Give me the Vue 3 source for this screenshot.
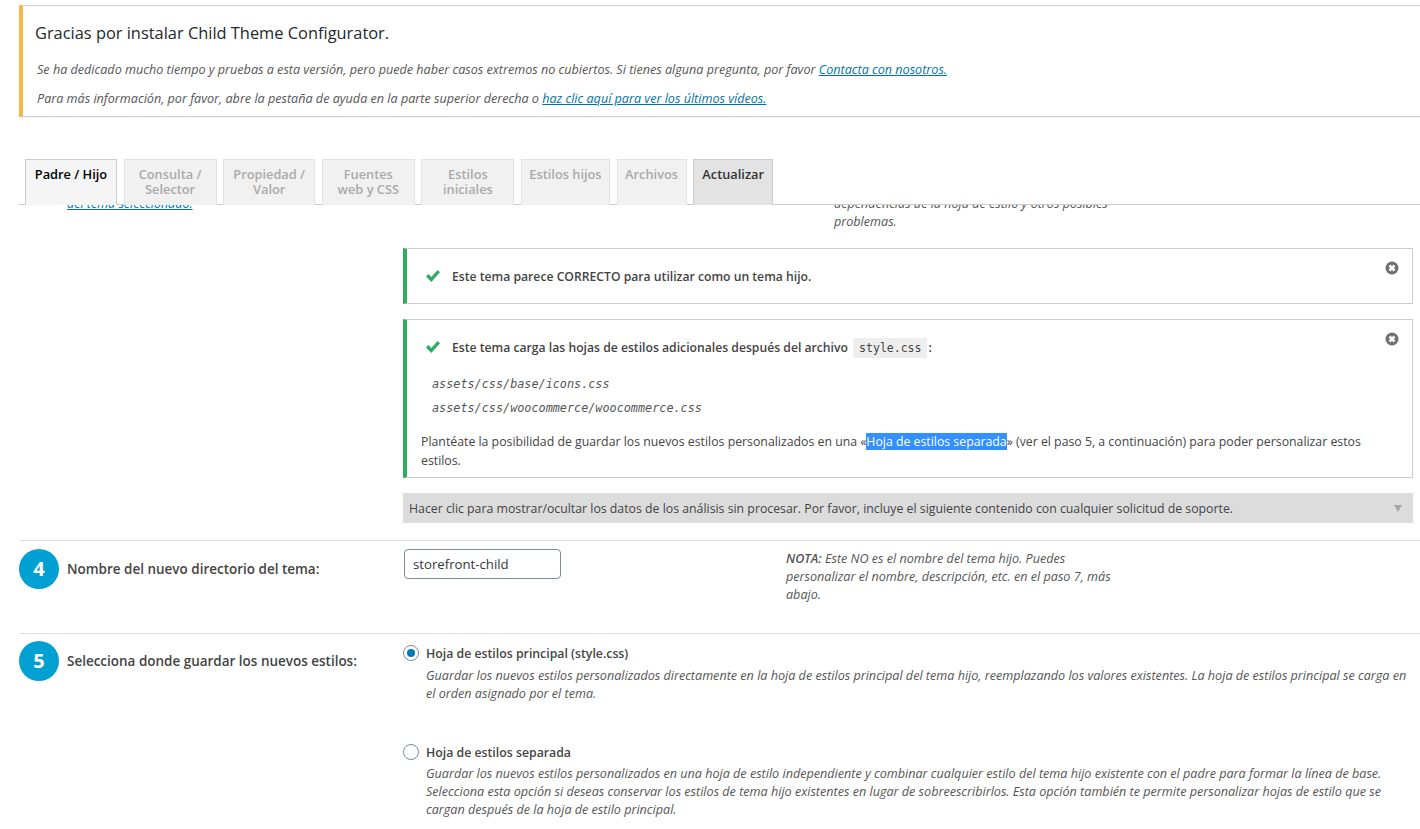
<template>
  <div class="page">
    <div class="notice">
      <h2>Gracias por instalar Child Theme Configurator.</h2>
      <p><em>Se ha dedicado mucho tiempo y pruebas a esta versión, pero puede haber casos extremos no cubiertos. Si tienes alguna pregunta, por favor <a href="#">Contacta con nosotros.</a></em></p>
      <p><em>Para más información, por favor, abre la pestaña de ayuda en la parte superior derecha o <a href="#">haz clic aquí para ver los últimos vídeos.</a></em></p>
    </div>

    <div class="tabs">
      <div
        v-for="tab in tabs"
        :key="tab.label"
        :class="['tab', { active: tab.active, update: tab.update }]"
        :style="{ width: tab.width + 'px' }"
      >{{ tab.label }}</div>
    </div>

    <div class="panel">
      <div class="cut-row">
        <a class="cut-link" href="#">del tema seleccionado.</a>
        <em class="cut-note">dependencias de la hoja de estilo y otros posibles problemas.</em>
      </div>

      <div class="analysis">
        <div class="alert first">
          <div class="alert-head">
            <svg class="check" viewBox="0 0 16 14"><path d="M1 7.4 3.4 5l2.9 3L12.6 1 15 3.300 6.300 13z" /></svg>
            <span>Este tema parece CORRECTO para utilizar como un tema hijo.</span>
          </div>
          <svg class="close" viewBox="0 0 14 14"><circle cx="7" cy="7" r="6.500" /><path d="M4.500 4.500l5 5M9.500 4.500l-5 5" /></svg>
        </div>

        <div class="alert second">
          <div class="alert-head">
            <svg class="check" viewBox="0 0 16 14"><path d="M1 7.4 3.4 5l2.9 3L12.6 1 15 3.300 6.300 13z" /></svg>
            <span>Este tema carga las hojas de estilos adicionales después del archivo <code>style.css</code>:</span>
          </div>
          <svg class="close" viewBox="0 0 14 14"><circle cx="7" cy="7" r="6.500" /><path d="M4.500 4.500l5 5M9.500 4.500l-5 5" /></svg>
          <div class="files">
            <div class="file">assets/css/base/icons.css</div>
            <div class="file">assets/css/woocommerce/woocommerce.css</div>
          </div>
          <p class="advice">Plantéate la posibilidad de guardar los nuevos estilos personalizados en una «<mark>Hoja de estilos separada</mark>» (ver el paso 5, a continuación) para poder personalizar estos estilos.</p>
        </div>

        <div class="raw">
          <span>Hacer clic para mostrar/ocultar los datos de los análisis sin procesar. Por favor, incluye el siguiente contenido con cualquier solicitud de soporte.</span>
          <i class="arrow"></i>
        </div>
      </div>

      <div class="step step-four">
        <div class="step-label">
          <span class="num">4</span>
          <strong>Nombre del nuevo directorio del tema:</strong>
        </div>
        <div class="step-input"><input type="text" value="storefront-child" /></div>
        <p class="note"><b>NOTA:</b> Este NO es el nombre del tema hijo. Puedes personalizar el nombre, descripción, etc. en el paso 7, más abajo.</p>
      </div>

      <div class="step step-five">
        <div class="step-label">
          <span class="num">5</span>
          <strong>Selecciona donde guardar los nuevos estilos:</strong>
        </div>
        <div class="options">
          <div class="option">
            <div class="option-head"><span class="radio on"></span><span>Hoja de estilos principal (style.css)</span></div>
            <p>Guardar los nuevos estilos personalizados directamente en la hoja de estilos principal del tema hijo, reemplazando los valores existentes. La hoja de estilos principal se carga en el orden asignado por el tema.</p>
          </div>
          <div class="option">
            <div class="option-head"><span class="radio"></span><span>Hoja de estilos separada</span></div>
            <p>Guardar los nuevos estilos personalizados en una hoja de estilo independiente y combinar cualquier estilo del tema hijo existente con el padre para formar la línea de base. Selecciona esta opción si deseas conservar los estilos de tema hijo existentes en lugar de sobreescribirlos. Esta opción también te permite personalizar hojas de estilo que se cargan después de la hoja de estilo principal.</p>
          </div>
        </div>
      </div>
    </div>
  </div>
</template>

<script setup>
const tabs = [
  { label: 'Padre / Hijo', width: 92, active: true },
  { label: 'Consulta /\nSelector', width: 93 },
  { label: 'Propiedad /\nValor', width: 92 },
  { label: 'Fuentes\nweb y CSS', width: 93 },
  { label: 'Estilos\niniciales', width: 93 },
  { label: 'Estilos hijos', width: 89 },
  { label: 'Archivos', width: 70 },
  { label: 'Actualizar', width: 80, update: true }
]
</script>

<style>
html, body {
  margin: 0;
  background: #fff;
  overflow: hidden;
}
</style>

<style scoped>
.page {
  height: 829px;
  overflow: hidden;
  padding-top: 5px;
  box-sizing: border-box;
  font-family: "Open Sans", "Noto Sans", sans-serif;
  font-size: 12.300px;
  color: #444;
}

em, .note, .option p {
  font-size: 12.600px;
  font-style: italic;
  color: #555;
}

a {
  color: #0073aa;
}

.notice {
  margin-left: 19px;
  height: 112px;
  box-sizing: border-box;
  border: 1px solid #ccd0d4;
  border-width: 1px 0;
  border-left: 4px solid #f4b942;
  padding: 16px 12px 0;
  box-shadow: 0 1px 1px rgba(0, 0, 0, .04);
}

.notice h2 {
  margin: 0 0 18px;
  font-size: 16.400px;
  line-height: 21px;
  font-weight: 500;
  color: #23282d;
}

.notice p {
  margin: 0 0 10.500px 2px;
  line-height: 18px;
}

.tabs {
  display: flex;
  gap: 6.600px;
  height: 46px;
  margin: 42px 0 0 25px;
  position: relative;
  z-index: 1;
}

.tab {
  box-sizing: border-box;
  height: 46px;
  padding-top: 7px;
  background: #f1f1f1;
  border: 1px solid #e2e2e2;
  border-bottom: 0;
  text-align: center;
  white-space: pre-line;
  font-weight: 600;
  font-size: 12.800px;
  line-height: 15px;
  color: #aaa;
}

.tab.active {
  color: #000;
  background: #f5f5f5;
  border-color: #ccc;
}

.tab.update {
  color: #333;
  background: #e3e3e3;
  border-color: #ccc;
}

.panel {
  border-top: 1px solid #ccc;
  margin-left: 19px;
  margin-top: -1px;
  overflow: hidden;
  height: 625px;
}

.cut-row {
  display: flex;
  height: 53px;
  margin-top: -10px;
  line-height: 18px;
}

.cut-link {
  margin-left: 48px;
  width: 767px;
  font-style: italic;
  font-size: 12.500px;
}

.cut-note {
  width: 290px;
}

.analysis {
  margin-left: 384px;
  margin-right: 7px;
}

.alert {
  position: relative;
  box-sizing: border-box;
  border: 1px solid #ccc;
  border-left: 4px solid #2ead5f;
  padding: 0 14px;
}

.alert.first {
  height: 56px;
  padding-top: 17px;
}

.alert.second {
  height: 159px;
  margin-top: 15px;
  padding-top: 17px;
}

.alert-head {
  display: flex;
  align-items: center;
  gap: 11px;
  margin-left: 4px;
  height: 20px;
  font-weight: 600;
  font-size: 12.200px;
}

.check {
  width: 16px;
  height: 14px;
  fill: #2ead5f;
}

.close {
  position: absolute;
  top: 12px;
  right: 13px;
  width: 14px;
  height: 14px;
}

.close circle {
  fill: #6e6e6e;
}

.close path {
  stroke: #fff;
  stroke-width: 2.600;
}

code {
  font-family: "DejaVu Sans Mono", monospace;
  font-size: 11.500px;
  padding: 3px 6px;
  margin: 0 1px 0 2px;
  background: #eee;
  font-weight: 400;
}

.files {
  margin-top: 15px;
}

.file {
  font-family: "DejaVu Sans Mono", monospace;
  font-style: italic;
  font-size: 11.800px;
  line-height: 24px;
  color: #555;
  margin-left: 11px;
}

.advice {
  margin: 12px 0 0;
  line-height: 19px;
}

mark {
  background: #3390ff;
  color: #fff;
}

.raw {
  display: flex;
  justify-content: space-between;
  align-items: center;
  height: 30px;
  margin-top: 15px;
  padding: 0 11px 0 6px;
  background: #dcdcdc;
}

.arrow {
  width: 0;
  height: 0;
  border: 4px solid transparent;
  border-top: 7px solid #a5a5a5;
  border-bottom: 0;
}

.step {
  display: flex;
  border-top: 1px solid #ddd;
}

.step-four {
  height: 93px;
  margin-top: 17px;
  padding-top: 8px;
  box-sizing: border-box;
}

.step-five {
  padding-top: 7px;
}

.step-label {
  display: flex;
  align-items: center;
  gap: 8px;
  width: 384px;
  height: 40px;
  flex: none;
}

.step-label strong {
  font-weight: 600;
  font-size: 13.480px;
}

.num {
  width: 40px;
  height: 40px;
  border-radius: 50%;
  background: #00a0d2;
  color: #fff;
  font-weight: 700;
  font-size: 20px;
  line-height: 40px;
  text-align: center;
  flex: none;
}

.step-input {
  width: 382px;
  flex: none;
  margin-left: 1px;
}

input {
  box-sizing: border-box;
  width: 157px;
  height: 30px;
  padding: 0 8px;
  border: 1px solid #7e8993;
  border-radius: 4px;
  font: inherit;
  font-size: 13.200px;
  color: #32373c;
}

.note {
  margin: 1px 0 0;
  width: 330px;
  line-height: 18px;
}

.note b {
  font-weight: 600;
}

.options {
  margin-top: 2px;
  width: 1010px;
}

.option {
  margin-bottom: 39px;
}

.option-head {
  display: flex;
  align-items: center;
  gap: 7px;
  height: 20px;
  font-weight: 600;
  font-size: 12.300px;
}

.option p {
  margin: 4px 0 0 23px;
  line-height: 18px;
}

.option:last-child p {
  margin-top: 3px;
}

.radio {
  box-sizing: border-box;
  width: 16px;
  height: 16px;
  border-radius: 50%;
  border: 1px solid #7e8993;
  display: flex;
  align-items: center;
  justify-content: center;
}

.radio.on::before {
  content: "";
  width: 8px;
  height: 8px;
  border-radius: 50%;
  background: #007cba;
}
</style>
